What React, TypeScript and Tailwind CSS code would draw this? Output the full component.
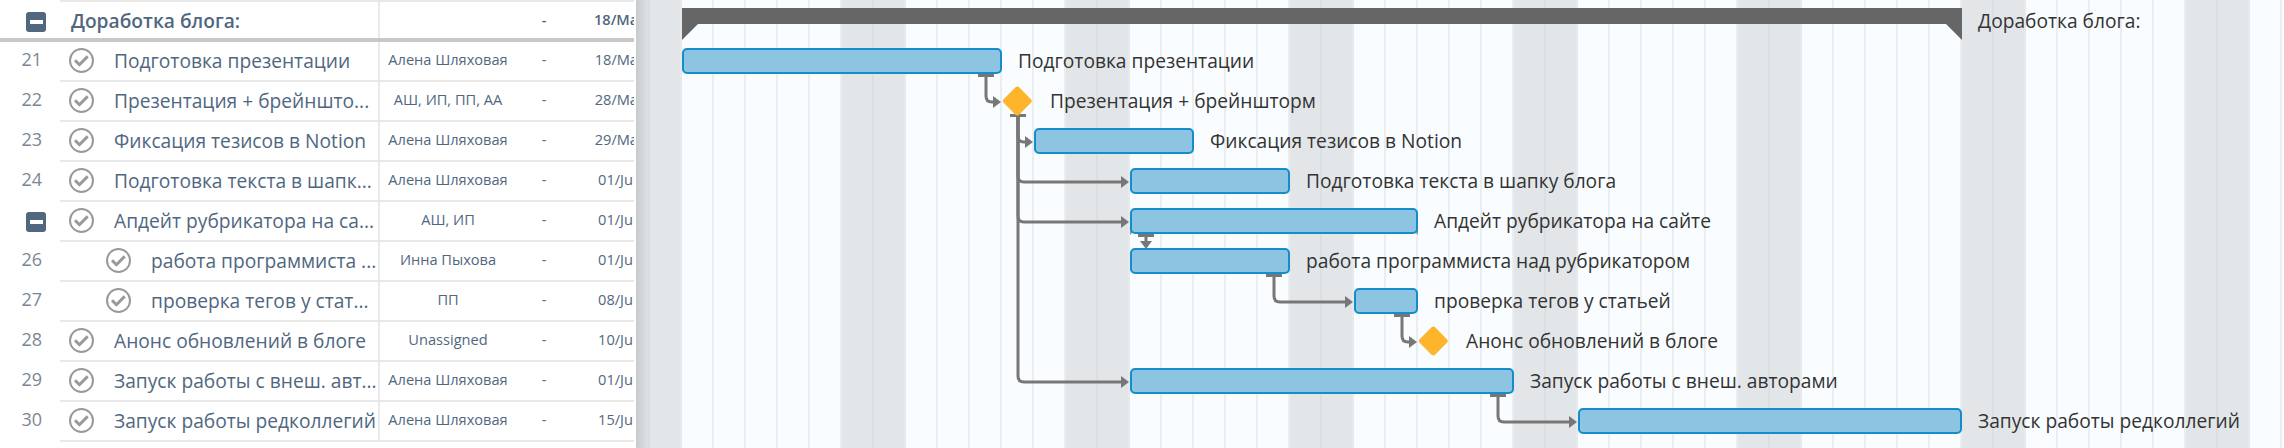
import React from "react";

type Task = {
  num: string;
  title: string;
  who: string;
  date: string;
  label: string;
  kind: "bar" | "milestone";
  start: number;
  width: number;
  indent?: boolean;
  group?: boolean;
};

const TASKS: Task[] = [
  { num: "21", title: "Подготовка презентации", who: "Алена Шляховая", date: "18/May", label: "Подготовка презентации", kind: "bar", start: 682, width: 320 },
  { num: "22", title: "Презентация + брейнштo...", who: "АШ, ИП, ПП, АА", date: "28/May", label: "Презентация + брейншторм", kind: "milestone", start: 1002, width: 32 },
  { num: "23", title: "Фиксация тезисов в Notion", who: "Алена Шляховая", date: "29/May", label: "Фиксация тезисов в Notion", kind: "bar", start: 1034, width: 160 },
  { num: "24", title: "Подготовка текста в шапк...", who: "Алена Шляховая", date: "01/Jun", label: "Подготовка текста в шапку блога", kind: "bar", start: 1130, width: 160 },
  { num: "", title: "Апдейт рубрикатора на са...", who: "АШ, ИП", date: "01/Jun", label: "Апдейт рубрикатора на сайте", kind: "bar", start: 1130, width: 288, group: true },
  { num: "26", title: "работа программиста ...", who: "Инна Пыхова", date: "01/Jun", label: "работа программиста над рубрикатором", kind: "bar", start: 1130, width: 160, indent: true },
  { num: "27", title: "проверка тегов у стат...", who: "ПП", date: "08/Jun", label: "проверка тегов у статьей", kind: "bar", start: 1354, width: 64, indent: true },
  { num: "28", title: "Анонс обновлений в блоге", who: "Unassigned", date: "10/Jun", label: "Анонс обновлений в блоге", kind: "milestone", start: 1418, width: 32 },
  { num: "29", title: "Запуск работы с внеш. авт...", who: "Алена Шляховая", date: "01/Jun", label: "Запуск работы с внеш. авторами", kind: "bar", start: 1130, width: 384 },
  { num: "30", title: "Запуск работы редколлегий", who: "Алена Шляховая", date: "15/Jun", label: "Запуск работы редколлегий", kind: "bar", start: 1578, width: 384 },
];

const ORIGIN = 636;
const WEEKENDS = [618, 842, 1066, 1290, 1514, 1738, 1962, 2186];
const DAYS = Array.from({ length: 52 }, (_, i) => 648 + i * 32);

function dayLineColor(x: number) {
  const phase = (x - 616) % 224;
  if (phase === 32) return "#dbdfe2";
  if (phase === 64) return "#e6eaed";
  return "#eaeef0";
}

function Collapse() {
  return (
    <span className="flex h-5 w-5 items-center justify-center rounded-[3px] bg-[#50677f]">
      <span className="h-1 w-[13px] bg-white" />
    </span>
  );
}

function Check() {
  return (
    <svg className="h-[25px] w-[25px] shrink-0" viewBox="0 0 25 25" fill="none" stroke="#999">
      <circle cx="12.5" cy="12.5" r="11.5" strokeWidth="2" />
      <path d="M6 12.3l4.4 4.4 8.3-8.3" strokeWidth="3" />
    </svg>
  );
}

function Cells({ who, date, bold }: { who: string; date: string; bold?: boolean }) {
  return (
    <div className={`flex w-[254px] shrink-0 overflow-hidden pt-1 text-[14.6px] leading-[26px] whitespace-nowrap ${bold ? "font-semibold" : ""}`}>
      <span className="w-[136px] shrink-0 text-center">{who}</span>
      <span className="w-[56px] shrink-0 text-center">-</span>
      <span className="w-[96px] shrink-0 text-center">{date}</span>
    </div>
  );
}

function Row({ task }: { task: Task }) {
  return (
    <div className="flex h-10 shrink-0">
      <div className="flex w-[60px] shrink-0 pl-[21.5px] text-[18px] leading-[34px] text-[#7d8794]">
        {task.group ? <span className="mt-2.5 ml-[4.5px] h-5"><Collapse /></span> : <span>{task.num}</span>}
      </div>
      <div className="flex grow border-b-2 border-[#e8e8e8]">
        <div className={`flex w-[320px] shrink-0 items-start border-r-2 border-[#ebebeb] whitespace-nowrap ${task.indent ? "pl-[46px]" : "pl-[9px]"}`}>
          <span className="mt-[6px]"><Check /></span>
          <span className="pl-5 text-[19.2px] leading-[38px]">{task.title}</span>
        </div>
        <Cells who={task.who} date={task.date} />
      </div>
    </div>
  );
}

function Table() {
  return (
    <div className="flex w-[634px] shrink-0 flex-col overflow-hidden bg-white text-[#50677f]">
      <div className="flex h-[42px] shrink-0 border-b-4 border-[#c8c8c8]">
        <div className="flex w-[60px] shrink-0 pt-3 pl-[26px]"><Collapse /></div>
        <div className="flex grow border-t-2 border-[#e8e8e8]">
          <div className="w-[320px] shrink-0 border-r-2 border-[#ebebeb] pl-[11px] text-[19.2px] leading-[38px] font-semibold">Доработка блога:</div>
          <Cells who="" date="18/May" bold />
        </div>
      </div>
      {TASKS.map((t) => <Row key={t.label} task={t} />)}
    </div>
  );
}

function Grid() {
  return (
    <svg className="absolute inset-0" width="1648" height="448" viewBox="636 0 1648 448" shapeRendering="crispEdges">
      <rect x="636" width="1648" height="448" fill="#f9fdff" />
      {WEEKENDS.map((x) => <rect key={x} x={x} width="64" height="448" fill="#e2e6e9" />)}
      {DAYS.map((x) => <rect key={x} x={x} width="2" height="448" fill={dayLineColor(x)} />)}
    </svg>
  );
}

const LINKS = [
  "M986 75V96q0 6 6 6h2",
  "M1018 116V136q0 6 6 6h3",
  "M1018 116V176q0 6 6 6h98",
  "M1018 116V216q0 6 6 6h98",
  "M1018 116V376q0 6 6 6h98",
  "M1146 235V242",
  "M1274 275V296q0 6 6 6h66",
  "M1402 315V336q0 6 6 6h2",
  "M1498 395V416q0 6 6 6h66",
];
const CAPS = [[978, 74], [1010, 114], [1138, 234], [1266, 274], [1394, 314], [1490, 394]];
const HEADS = [[1001, 102], [1033, 142], [1129, 182], [1129, 222], [1129, 382], [1353, 302], [1417, 342], [1577, 422]];

function Links() {
  return (
    <svg className="absolute inset-0" width="1648" height="448" viewBox="636 0 1648 448">
      <g fill="none" stroke="#777" strokeWidth="3">{LINKS.map((d) => <path key={d} d={d} />)}</g>
      <path d="M1130 228v7l7 -7zM1418 228v7l-7 -7z" fill="#999" />
      <g fill="#777">
        {CAPS.map(([x, y]) => <rect key={x} x={x} y={y} width="16" height="3" />)}
        {HEADS.map(([x, y]) => <path key={`${x}-${y}`} d={`M${x} ${y}l-8 -6v12z`} />)}
        <path d="M1146 249l-6 -8h12z" />
      </g>
    </svg>
  );
}

function Chart() {
  return (
    <div className="relative h-full w-[1648px] shrink-0 overflow-hidden">
      <Grid />
      <Links />
      <div className="relative flex h-10 items-start pl-[46px]">
        <svg className="mt-2 shrink-0" width="1280" height="32" viewBox="0 0 1280 32">
          <path d="M0 0H1280V32L1264 16H16L0 32Z" fill="#666" />
        </svg>
        <span className="pl-4 text-[19.2px] leading-[42px] text-[#333]">Доработка блога:</span>
      </div>
      {TASKS.map((t) => (
        <div key={t.label} className="relative flex h-10 items-start" style={{ paddingLeft: t.start - ORIGIN }}>
          {t.kind === "bar" ? (
            <span className="mt-2 h-[26px] shrink-0 rounded-[5px] border-2 border-[#168dcb] bg-[#8cc4e2]" style={{ width: t.width }} />
          ) : (
            <svg className="mt-1.5 shrink-0" width="32" height="30" viewBox="0 0 32 30">
              <rect x="4.3" y="4" width="22" height="22" rx="3" fill="#ffb52b" transform="rotate(45 15.3 15)" />
            </svg>
          )}
          <span className="pl-4 text-[19.2px] leading-[42px] whitespace-nowrap text-[#333]">{t.label}</span>
        </div>
      ))}
      <div className="absolute inset-y-0 left-0 w-3.5 bg-linear-to-r from-black/12 to-transparent" />
    </div>
  );
}

export default function App() {
  return (
    <div className="flex h-[448px] w-[2284px] overflow-hidden bg-white font-['Open_Sans',sans-serif]">
      <Table />
      <div className="w-0.5 shrink-0 bg-white" />
      <Chart />
    </div>
  );
}
